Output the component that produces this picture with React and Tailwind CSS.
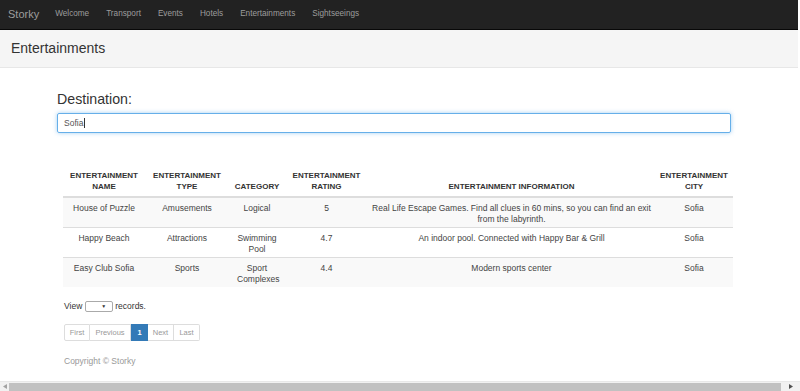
import React from "react";

const rows = [
  { name: "House of Puzzle", type: "Amusements", cat: "Logical", rating: "5", info: "Real Life Escape Games. Find all clues in 60 mins, so you can find an exit from the labyrinth.", city: "Sofia" },
  { name: "Happy Beach", type: "Attractions", cat: "Swimming Pool", rating: "4.7", info: "An indoor pool. Connected with Happy Bar & Grill", city: "Sofia" },
  { name: "Easy Club Sofia", type: "Sports", cat: "Sport Complexes", rating: "4.4", info: "Modern sports center", city: "Sofia" },
];

export default function App() {
  return (
    <div className="w-[800px] h-[391px] flex flex-col overflow-hidden bg-white" style={{ fontFamily: '"Liberation Sans", Arial, sans-serif' }}>
      <nav className="w-[798px] h-[30px] shrink-0 bg-[#222222] border-b border-[#080808] flex items-center pl-[8px] gap-[17px]">
        <span className="text-[11px] text-[#9d9d9d] mr-[-1px]">Storky</span>
        {["Welcome", "Transport", "Events", "Hotels", "Entertainments", "Sightseeings"].map((l) => (
          <span key={l} className="text-[8.2px] text-[#9d9d9d]">{l}</span>
        ))}
      </nav>
      <div className="w-[798px] h-[38px] shrink-0 bg-[#f5f5f5] border-b border-[#e7e7e7] flex items-center pl-[11px]">
        <span className="text-[14px] text-[#333]">Entertainments</span>
      </div>
      <div className="pl-[57px] pt-[22px] text-[#333]">
        <div className="text-[14.2px] leading-[18px]">Destination:</div>
        <div className="mt-[5px] w-[674px] h-[20px] border border-[#66afe9] rounded-[2px] shadow-[0_0_4px_rgba(102,175,233,0.6)] flex items-center pl-[6px] text-[8.5px] text-[#555]">
          Sofia<span className="w-px h-[10px] bg-[#333] ml-px" />
        </div>
        <table className="mt-[37px] ml-[6px] w-[670px] table-fixed border-collapse text-[8.5px] leading-[11px] text-[#444]">
          <colgroup>
            <col className="w-[82px]" />
            <col className="w-[84px]" />
            <col className="w-[56px]" />
            <col className="w-[83px]" />
            <col className="w-[287px]" />
            <col className="w-[78px]" />
          </colgroup>
          <thead>
            <tr className="border-b-2 border-[#dddddd] text-[#333] font-bold text-[8px]">
              <th className="align-bottom pb-[4px] px-[3px]">ENTERTAINMENT<br />NAME</th>
              <th className="align-bottom pb-[4px] px-[3px]">ENTERTAINMENT<br />TYPE</th>
              <th className="align-bottom pb-[4px] px-[3px]">CATEGORY</th>
              <th className="align-bottom pb-[4px] px-[3px]">ENTERTAINMENT<br />RATING</th>
              <th className="align-bottom pb-[4px] px-[3px]">ENTERTAINMENT INFORMATION</th>
              <th className="align-bottom pb-[4px] px-[3px]">ENTERTAINMENT<br />CITY</th>
            </tr>
          </thead>
          <tbody>
            {rows.map((r, i) => (
              <tr key={r.name} className={`border-t border-[#dddddd] ${i % 2 === 0 ? "bg-[#f9f9f9]" : "bg-white"}`}>
                <td className="align-top text-center h-[30px] pt-[5px] px-[3px]">{r.name}</td>
                <td className="align-top text-center pt-[5px] px-[3px]">{r.type}</td>
                <td className="align-top text-center pt-[5px] px-[8px]">{r.cat}</td>
                <td className="align-top text-center pt-[5px] px-[3px]">{r.rating}</td>
                <td className="align-top text-center pt-[5px] px-[3px]">{r.info}</td>
                <td className="align-top text-center pt-[5px] px-[3px]">{r.city}</td>
              </tr>
            ))}
          </tbody>
        </table>
        <div className="ml-[7px] mt-[13px] flex items-center text-[8.5px] text-[#333]">
          <span>View</span>
          <span className="ml-[3px] w-[28px] h-[11px] border border-[#aaa] rounded-[2px] bg-white flex items-center justify-end pr-[6px]">
            <span className="text-[5px] leading-none text-[#333]">▼</span>
          </span>
          <span className="ml-[2px]">records.</span>
        </div>
        <div className="ml-[7px] mt-[11px] flex h-[17px] text-[7.5px] text-[#999]">
          <span className="w-[26px] flex items-center justify-center border border-[#ddd] rounded-l-[2px]">First</span>
          <span className="w-[41px] flex items-center justify-center border border-l-0 border-[#ddd]">Previous</span>
          <span className="w-[17px] flex items-center justify-center bg-[#337ab7] border border-[#337ab7] text-white font-bold">1</span>
          <span className="w-[26px] flex items-center justify-center border border-l-0 border-[#ddd]">Next</span>
          <span className="w-[26px] flex items-center justify-center border border-l-0 border-[#ddd] rounded-r-[2px]">Last</span>
        </div>
        <div className="ml-[7px] mt-[14px] text-[8.5px] text-[#999]">Copyright © Storky</div>
      </div>
      <div className="flex-1" />
      <div className="h-[10px] shrink-0 bg-[#f1f1f1] border-t border-[#e8e8e8] flex items-center">
        <span className="w-[9px] flex justify-center">
          <svg width="4" height="5" viewBox="0 0 4 5"><path d="M4 0 L0 2.5 L4 5 Z" fill="#a3a3a3" /></svg>
        </span>
        <span className="w-[772px] h-[8px] bg-[#c1c1c1]" />
        <span className="flex-1 flex justify-center">
          <svg width="4" height="5" viewBox="0 0 4 5"><path d="M0 0 L4 2.5 L0 5 Z" fill="#505050" /></svg>
        </span>
      </div>
    </div>
  );
}
